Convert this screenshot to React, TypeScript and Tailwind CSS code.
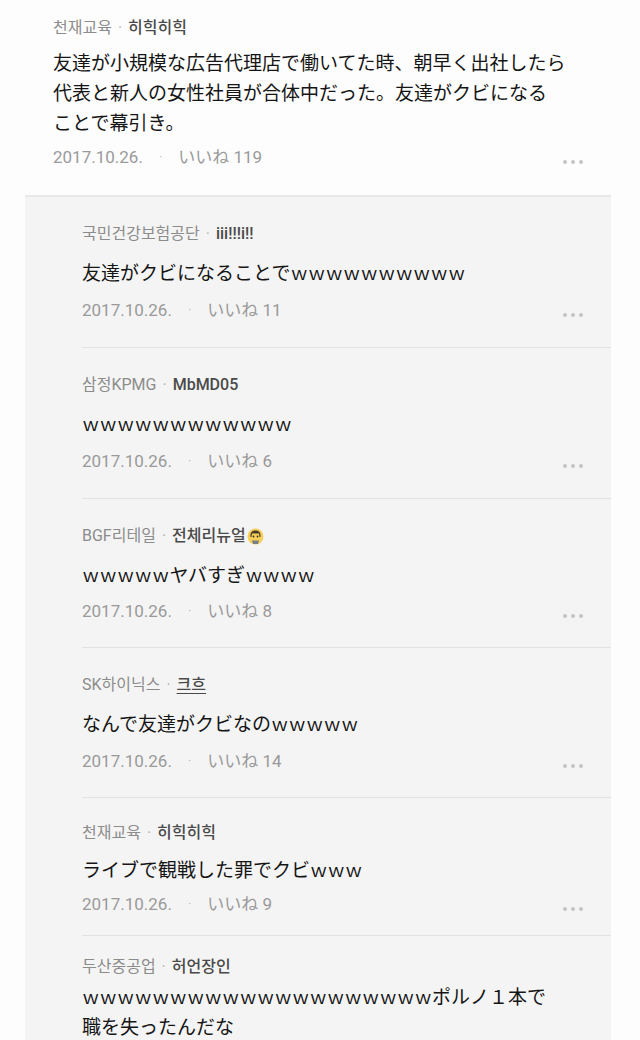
import React from 'react'

type Reply = {
  company: string
  nick: string
  emoji?: boolean
  underline?: boolean
  lines: string[]
  likes?: number
  pad: string
  bodyMt: string
  metaMt?: string
}

const replies: Reply[] = [
  { company: '국민건강보험공단', nick: 'iii!!!i!!', lines: ['友達がクビになることでｗｗｗｗｗｗｗｗｗｗ'], likes: 11, pad: 'pt-[27px] pb-[27px]', bodyMt: 'mt-[13px]', metaMt: 'mt-[13px]' },
  { company: '삼정KPMG', nick: 'MbMD05', lines: ['ｗｗｗｗｗｗｗｗｗｗｗｗ'], likes: 6, pad: 'pt-[27px] pb-[27px]', bodyMt: 'mt-[13px]', metaMt: 'mt-[13px]' },
  { company: 'BGF리테일', nick: '전체리뉴얼', emoji: true, lines: ['ｗｗｗｗｗヤバすぎｗｗｗｗ'], likes: 8, pad: 'pt-[27px] pb-[26px]', bodyMt: 'mt-[13px]', metaMt: 'mt-[12px]' },
  { company: 'SK하이닉스', nick: '크흐', underline: true, lines: ['なんで友達がクビなのｗｗｗｗｗ'], likes: 14, pad: 'pt-[27px] pb-[26px]', bodyMt: 'mt-[13px]', metaMt: 'mt-[13px]' },
  { company: '천재교육', nick: '히힉히힉', lines: ['ライブで観戦した罪でクビｗｗｗ'], likes: 9, pad: 'pt-[25px] pb-[21px]', bodyMt: 'mt-[11px]', metaMt: 'mt-[10px]' },
  {
    company: '두산중공업',
    nick: '허언장인',
    lines: ['ｗｗｗｗｗｗｗｗｗｗｗｗｗｗｗｗｗｗｗｗポルノ１本で', '職を失ったんだな'],
    pad: 'pt-[21px] pb-[10px]',
    bodyMt: 'mt-[4px]',
  },
]

// ｗ runs render a bit smaller than the kana around them
function Body({ text }: { text: string }) {
  const parts = text.split(/(ｗ+)/).filter(Boolean)
  return (
    <div className="h-[30px] overflow-visible">
      {parts.map((p, i) =>
        p.startsWith('ｗ') ? (
          <span key={i} className="text-[17.5px] leading-[20px]">{p}</span>
        ) : (
          <span key={i}>{p}</span>
        )
      )}
    </div>
  )
}

function Dots() {
  return (
    <div className="flex gap-[4px] mt-[13px]">
      <span className="w-[4px] h-[4px] rounded-full bg-[#c4c4c4]" />
      <span className="w-[4px] h-[4px] rounded-full bg-[#c4c4c4]" />
      <span className="w-[4px] h-[4px] rounded-full bg-[#c4c4c4]" />
    </div>
  )
}

function Face() {
  return (
    <svg width="17" height="17" viewBox="0 0 17 17" className="ml-[1px]">
      <circle cx="8.5" cy="8.5" r="8" fill="#f5cf5a" />
      <path d="M3.5 9 C3 4 5.5 2.5 8.5 2.5 C11.5 2.5 14 4 13.5 9 L12.5 9 L12 5.5 L5 5.5 L4.5 9 Z" fill="#4a3a2a" />
      <circle cx="6.5" cy="8.5" r="0.9" fill="#3a2a1a" />
      <circle cx="10.5" cy="8.5" r="0.9" fill="#3a2a1a" />
      <path d="M5 12.5 L12 12.5 L11 16 L6 16 Z" fill="#7a7e88" />
    </svg>
  )
}

function Header({ company, nick, emoji, underline }: { company: string; nick: string; emoji?: boolean; underline?: boolean }) {
  return (
    <div className="flex items-center h-[20px] text-[16px] leading-[20px] font-[Roboto,'Noto_Sans_CJK_KR',sans-serif]">
      <span className="text-[#8c8c8c]">{company}</span>
      <span className="text-[#b5b5b5] mx-[6px]">·</span>
      <span className={underline ? 'text-[#4a4a4a] font-medium underline underline-offset-[3px]' : 'text-[#4a4a4a] font-medium'}>{nick}</span>
      {emoji && <Face />}
    </div>
  )
}

function Meta({ likes }: { likes: number }) {
  return (
    <div className="flex items-start justify-between h-[20px]">
      <div className="flex items-center text-[17px] leading-[20px] text-[#9a9a9a] font-[Roboto,'Noto_Sans_CJK_JP',sans-serif]">
        <span>2017.10.26.</span>
        <span className="mx-[16px] text-[#bdbdbd] text-[13px]">·</span>
        <span>いいね {likes}</span>
      </div>
      <Dots />
    </div>
  )
}

function ReplyItem({ r, first }: { r: Reply; first: boolean }) {
  return (
    <div className={`${first ? '' : 'border-t border-[#e2e2e2]'} ${r.pad} pr-[28px]`}>
      <Header company={r.company} nick={r.nick} emoji={r.emoji} underline={r.underline} />
      <div className={`${r.bodyMt} text-[19px] leading-[30px] text-[#151515] font-['Noto_Sans_CJK_JP',sans-serif]`}>
        {r.lines.map((l, i) => (
          <Body key={i} text={l} />
        ))}
      </div>
      {r.likes !== undefined && (
        <div className={r.metaMt}>
          <Meta likes={r.likes} />
        </div>
      )}
    </div>
  )
}

export default function App() {
  return (
    <div className="w-[640px] min-h-[1040px] bg-[#fdfdfd]">
      <div className="pl-[53px] pr-[57px] pt-[18px] pb-[28px]">
        <Header company="천재교육" nick="히힉히힉" />
        <div className="mt-[9px] text-[19px] leading-[30px] text-[#151515] font-['Noto_Sans_CJK_JP',sans-serif]">
          <div>友達が小規模な広告代理店で働いてた時、朝早く出社したら</div>
          <div>代表と新人の女性社員が合体中だった。友達がクビになる</div>
          <div>ことで幕引き。</div>
        </div>
        <div className="mt-[10px]">
          <Meta likes={119} />
        </div>
      </div>

      <div className="ml-[25px] mr-[29px] bg-[#f4f4f4] border-t-2 border-[#e9e9e9] pl-[57px]">
        {replies.map((r, i) => (
          <ReplyItem key={i} r={r} first={i === 0} />
        ))}
      </div>
    </div>
  )
}
